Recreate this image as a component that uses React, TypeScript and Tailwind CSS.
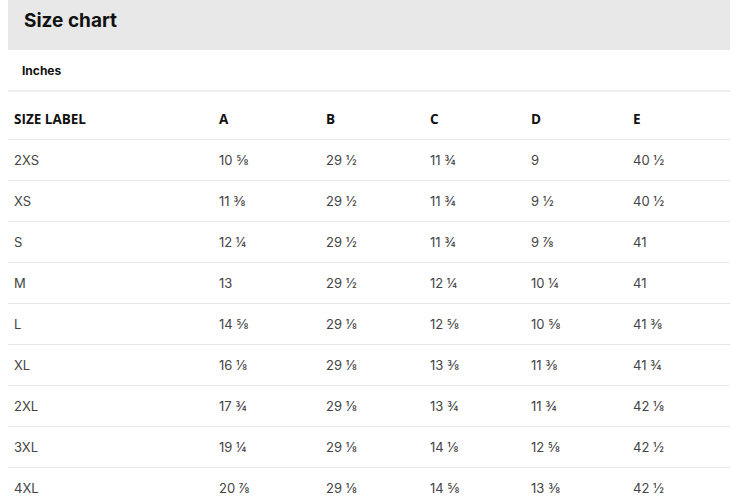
const columns = ['SIZE LABEL', 'A', 'B', 'C', 'D', 'E'];

const rows = [
  ['2XS', '10 ⅝', '29 ½', '11 ¾', '9', '40 ½'],
  ['XS', '11 ⅜', '29 ½', '11 ¾', '9 ½', '40 ½'],
  ['S', '12 ¼', '29 ½', '11 ¾', '9 ⅞', '41'],
  ['M', '13', '29 ½', '12 ¼', '10 ¼', '41'],
  ['L', '14 ⅝', '29 ⅛', '12 ⅝', '10 ⅝', '41 ⅜'],
  ['XL', '16 ⅛', '29 ⅛', '13 ⅜', '11 ⅜', '41 ¾'],
  ['2XL', '17 ¾', '29 ⅛', '13 ¾', '11 ¾', '42 ⅛'],
  ['3XL', '19 ¼', '29 ⅛', '14 ⅛', '12 ⅝', '42 ½'],
  ['4XL', '20 ⅞', '29 ⅛', '14 ⅝', '13 ⅜', '42 ½'],
];

const grid = 'grid grid-cols-[205px_107px_104px_101px_102px_1fr]';

export default function App() {
  return (
    <div className="h-[500px] w-[750px] overflow-hidden bg-white font-['Inter','Liberation_Sans',sans-serif]">
      <div className="ml-2 w-[722px]">
        <div className="h-[50px] bg-[#e8e8e8] pl-4 pt-[7px]">
          <h2 className="text-[19px] font-bold text-[#111]">Size chart</h2>
        </div>
        <div className="flex h-[42px] items-center border-b-2 border-[#eeeeee] pl-3.5 pt-px">
          <span className="text-[12px] font-bold text-[#111]">Inches</span>
        </div>
        <div className={`${grid} h-[48px] items-end border-b border-[#e6e6e6] pb-[10px] font-['Open_Sans',sans-serif] text-[13.5px] font-bold text-[#111]`}>
          {columns.map(c => (
            <div key={c} className="pl-1.5">{c}</div>
          ))}
        </div>
        {rows.map(r => (
          <div key={r[0]} className={`${grid} h-[41px] items-center border-b border-[#e6e6e6] pt-px text-[13px] text-[#444]`}>
            {r.map((v, i) => (
              <div key={i} className="pl-1.5">{v}</div>
            ))}
          </div>
        ))}
      </div>
    </div>
  );
}
